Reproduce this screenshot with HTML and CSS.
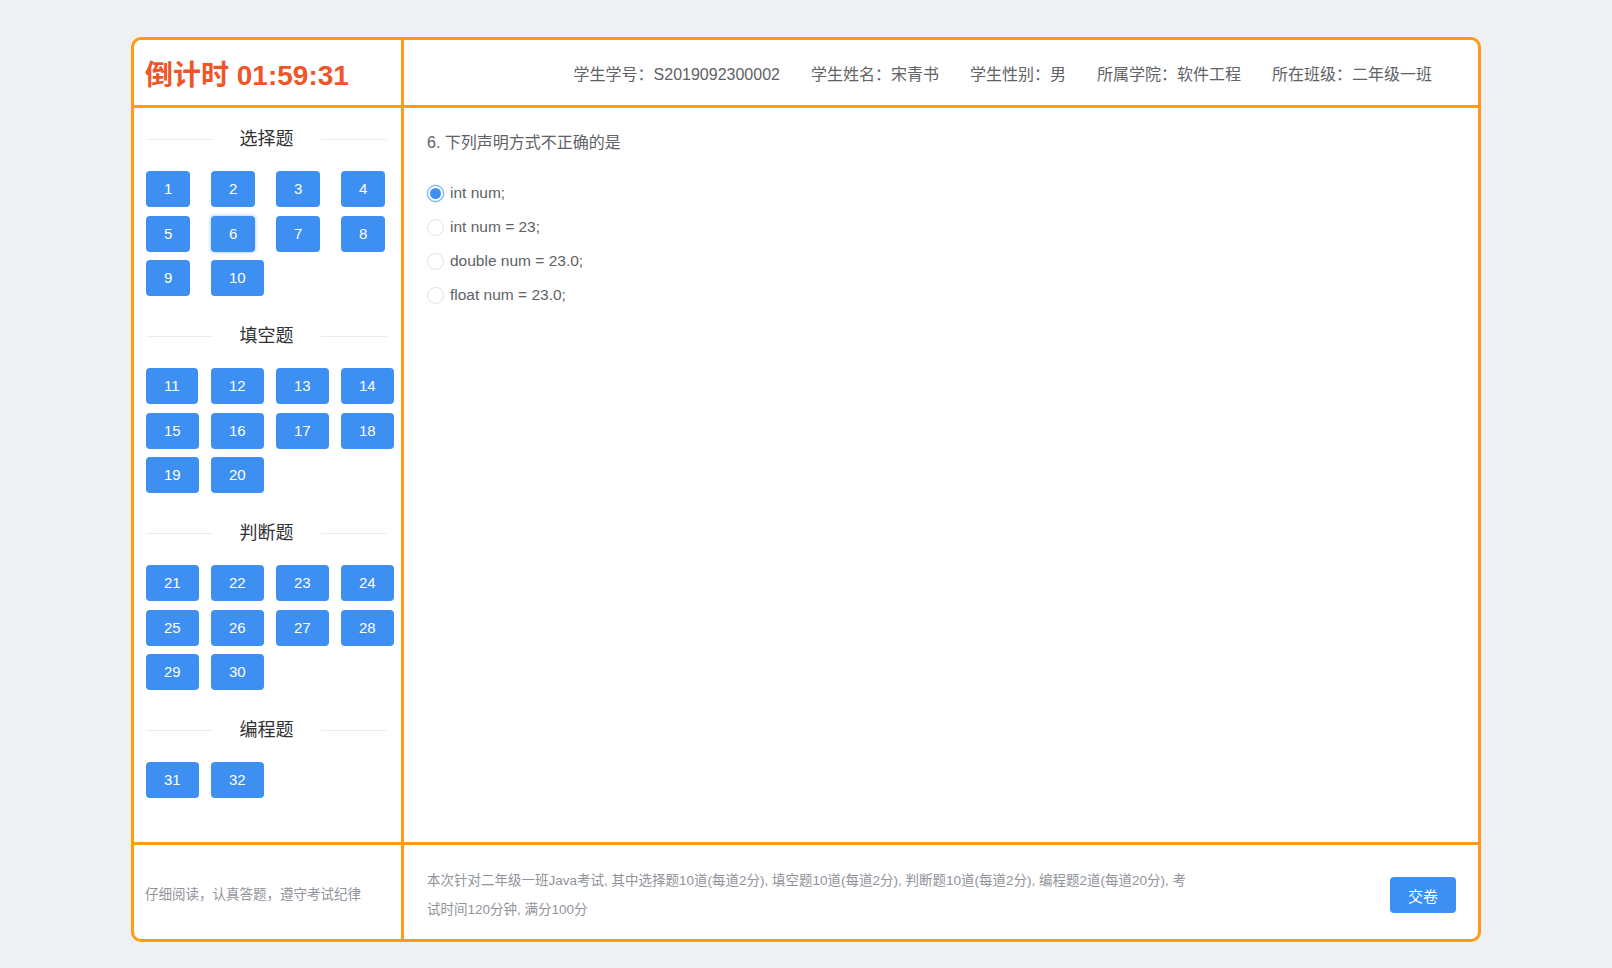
FILE: index.html
```html
<!DOCTYPE html>
<html lang="zh-CN">
<head>
<meta charset="utf-8">
<title>在线考试</title>
<link rel="stylesheet" href="styles.css">
</head>
<body>
<div class="exam">
  <div class="timer-cell"><span class="timer">倒计时 01:59:31</span></div>
  <div class="info-cell">
    <span class="info">学生学号：S2019092300002</span>
    <span class="info">学生姓名：宋青书</span>
    <span class="info">学生性别：男</span>
    <span class="info">所属学院：软件工程</span>
    <span class="info">所在班级：二年级一班</span>
  </div>

  <aside class="sidebar">
    <section class="group">
      <div class="group-title"><span>选择题</span></div>
      <div class="nums">
        <button class="num">1</button><button class="num">2</button><button class="num">3</button><button class="num">4</button>
        <button class="num">5</button><button class="num current">6</button><button class="num">7</button><button class="num">8</button>
        <button class="num">9</button><button class="num">10</button>
      </div>
    </section>
    <section class="group">
      <div class="group-title"><span>填空题</span></div>
      <div class="nums">
        <button class="num">11</button><button class="num">12</button><button class="num">13</button><button class="num">14</button>
        <button class="num">15</button><button class="num">16</button><button class="num">17</button><button class="num">18</button>
        <button class="num">19</button><button class="num">20</button>
      </div>
    </section>
    <section class="group">
      <div class="group-title"><span>判断题</span></div>
      <div class="nums">
        <button class="num">21</button><button class="num">22</button><button class="num">23</button><button class="num">24</button>
        <button class="num">25</button><button class="num">26</button><button class="num">27</button><button class="num">28</button>
        <button class="num">29</button><button class="num">30</button>
      </div>
    </section>
    <section class="group">
      <div class="group-title"><span>编程题</span></div>
      <div class="nums">
        <button class="num">31</button><button class="num">32</button>
      </div>
    </section>
  </aside>

  <main class="question">
    <p class="q-title">6. 下列声明方式不正确的是</p>
    <ul class="options">
      <li class="option checked"><span class="radio"></span><span class="label">int num;</span></li>
      <li class="option"><span class="radio"></span><span class="label">int num = 23;</span></li>
      <li class="option"><span class="radio"></span><span class="label">double num = 23.0;</span></li>
      <li class="option"><span class="radio"></span><span class="label">float num = 23.0;</span></li>
    </ul>
  </main>

  <div class="foot-left">仔细阅读，认真答题，遵守考试纪律</div>
  <div class="foot-right">
    <p class="notice">本次针对二年级一班Java考试, 其中选择题10道(每道2分), 填空题10道(每道2分), 判断题10道(每道2分), 编程题2道(每道20分), 考试时间120分钟, 满分100分</p>
    <button class="submit">交卷</button>
  </div>
</div>
</body>
</html>
```

FILE: styles.css
```css
* {
  box-sizing: border-box;
}

html, body {
  margin: 0;
  padding: 0;
  background: #eef0f3;
  font-family: "Liberation Sans", Arial, "Noto Sans CJK SC", sans-serif;
}

body {
  padding-top: 37px;
}

.exam {
  width: 1350px;
  height: 905px;
  margin: 0 auto;
  background: #fff;
  border: 3px solid #ff9a14;
  border-radius: 10px;
  overflow: hidden;
  display: grid;
  grid-template-columns: 270px 1fr;
  grid-template-rows: 68px 734px 97px;
}

/* header */
.timer-cell {
  border-right: 3px solid #ff9a14;
  border-bottom: 3px solid #ff9a14;
  display: flex;
  align-items: center;
  padding: 0 0 0 11px;
}

.timer {
  font-size: 28px;
  font-weight: bold;
  color: #ee5527;
}

.info-cell {
  border-bottom: 3px solid #ff9a14;
  display: flex;
  align-items: center;
  justify-content: flex-end;
  gap: 31px;
  padding: 0 46px 0 0;
}

.info {
  font-size: 16px;
  color: #606266;
  white-space: nowrap;
}

/* sidebar */
.sidebar {
  border-right: 3px solid #ff9a14;
  padding: 19px 14px 0 12px;
  overflow: hidden;
}

.group {
  margin-bottom: 28px;
}

.group-title {
  display: flex;
  align-items: center;
  height: 24px;
  margin-bottom: 20px;
}

.group-title::before,
.group-title::after {
  content: "";
  flex: 1;
  height: 1px;
  background: #eaecf0;
}

.group-title span {
  padding: 0 27px;
  font-size: 18px;
  line-height: 24px;
  color: #303133;
}

.nums {
  display: grid;
  grid-template-columns: repeat(4, 65px);
  row-gap: 8.5px;
  justify-items: start;
}

.num {
  height: 36px;
  padding: 0 18px;
  border: none;
  border-radius: 4px;
  background: #3d8ff2;
  color: #fff;
  font-family: inherit;
  font-size: 15px;
  line-height: 36px;
  cursor: pointer;
}

.num.current {
  box-shadow: 0 0 0 1px #d3e5fb, 0 0 3px 2px rgba(64, 158, 255, 0.18);
}

/* question */
.question {
  padding: 24px 23px 0 23px;
}

.q-title {
  margin: 0 0 22px;
  font-size: 16px;
  line-height: 22px;
  color: #606266;
}

.options {
  list-style: none;
  margin: 0;
  padding: 0;
}

.option {
  display: flex;
  align-items: center;
  height: 34px;
}

.radio {
  width: 17px;
  height: 17px;
  border: 1px solid #dcdfe6;
  border-radius: 50%;
  background: #fff;
  margin-right: 6px;
  display: flex;
  align-items: center;
  justify-content: center;
}

.option.checked .radio {
  border-color: #5a9ff0;
  box-shadow: 0 0 0 1px rgba(64, 158, 255, 0.15);
}

.option.checked .radio::after {
  content: "";
  width: 11px;
  height: 11px;
  border-radius: 50%;
  background: #3d8ff2;
}

.label {
  font-size: 15.5px;
  color: #606266;
}

/* footer */
.foot-left {
  border-right: 3px solid #ff9a14;
  border-top: 3px solid #ff9a14;
  display: flex;
  align-items: center;
  padding: 2px 0 0 11px;
  font-size: 13.5px;
  color: #909399;
}

.foot-right {
  border-top: 3px solid #ff9a14;
  display: flex;
  align-items: center;
  padding: 6px 22px 0 23px;
}

.notice {
  width: 766px;
  margin: 0;
  font-size: 13.5px;
  line-height: 29px;
  color: #909399;
}

.submit {
  margin-left: auto;
  height: 36px;
  padding: 0 18px;
  border: none;
  border-radius: 4px;
  background: #3d8ff2;
  color: #fff;
  font-family: inherit;
  font-size: 15px;
  cursor: pointer;
}
```
